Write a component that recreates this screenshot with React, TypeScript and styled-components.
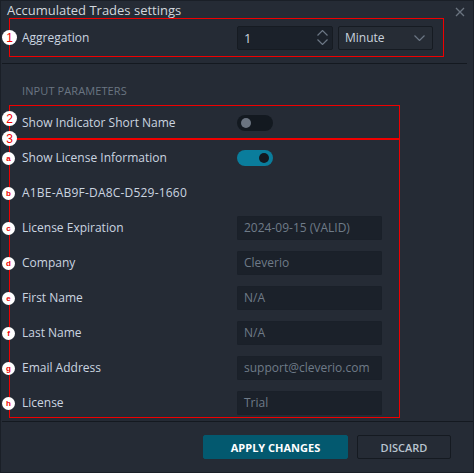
import React from "react";
import styled, { createGlobalStyle } from "styled-components";

const GlobalStyle = createGlobalStyle`
  html, body {
    margin: 0;
    padding: 0;
    background: #252b35;
  }
  * {
    box-sizing: border-box;
  }
`;

const font = `"Open Sans", "Noto Sans", sans-serif`;
const red = "#f00000";

const Dialog = styled.div`
  width: 474px;
  height: 473px;
  background: #252b35;
  border: 1px solid #1a1f27;
  display: flex;
  flex-direction: column;
  font-family: ${font};
  color: #c9d3de;
  position: relative;
`;

const Header = styled.div`
  height: 17px;
  display: flex;
  align-items: center;
  justify-content: space-between;
  padding: 0 8px 0 6px;
`;

const Title = styled.div`
  font-size: 13px;
  color: #d2d7dd;
  line-height: 17px;
  margin-top: 1px;
`;

const CloseBtn = styled.button`
  border: 0;
  background: none;
  padding: 0;
  width: 10px;
  height: 10px;
  margin-top: 5px;
  display: flex;
  cursor: pointer;
`;

const TopBox = styled.div`
  position: relative;
  border: 1px solid ${red};
  margin: 0 29px 0 8px;
  height: 39px;
  display: flex;
  align-items: center;
  padding-left: 12px;
`;

const Divider = styled.div<{ $right?: number }>`
  height: 1px;
  background: #141920;
  margin-left: 1px;
  margin-right: ${(p) => p.$right ?? 0}px;
`;

const Badge = styled.span<{ $small?: boolean; $top: number }>`
  position: absolute;
  left: -8px;
  top: ${(p) => p.$top}px;
  width: ${(p) => (p.$small ? 13 : 15)}px;
  height: ${(p) => (p.$small ? 13 : 15)}px;
  border-radius: 50%;
  background: #ffffff;
  color: ${red};
  font-family: "Liberation Sans", Arial, sans-serif;
  font-size: ${(p) => (p.$small ? 8 : 12)}px;
  font-weight: ${(p) => (p.$small ? 700 : 400)};
  display: flex;
  align-items: center;
  justify-content: center;
  line-height: 1;
  z-index: 2;
`;

const Label = styled.div`
  width: 215px;
  font-size: 12px;
  color: #cbd5e0;
  flex-shrink: 0;
`;

const NumberBox = styled.div`
  width: 96px;
  height: 24px;
  background: #1b212a;
  border: 1px solid #161b22;
  border-radius: 2px;
  display: flex;
  align-items: center;
  justify-content: space-between;
  padding: 0 4px 0 6px;
  font-size: 13px;
  color: #c9d3de;
`;

const Spinner = styled.div`
  display: flex;
  flex-direction: column;
  gap: 3px;
`;

const SelectBox = styled.div`
  width: 95px;
  height: 24px;
  margin-left: 5px;
  background: #262c35;
  border: 1px solid #161b22;
  border-radius: 2px;
  display: flex;
  align-items: center;
  justify-content: space-between;
  padding: 0 7px 0 6px;
  font-size: 12px;
  color: #c9d3de;
`;

const Body = styled.div`
  flex: 1;
  display: flex;
  flex-direction: column;
`;

const SectionTitle = styled.div`
  font-size: 11px;
  color: #6a7582;
  height: 41px;
  padding-top: 19px;
  padding-left: 21px;
  letter-spacing: 0.1px;
`;

const BoxTwo = styled.div`
  position: relative;
  border: 1px solid ${red};
  border-bottom: 0;
  margin: 0 73px 0 8px;
  height: 33px;
`;

const BoxThree = styled.div`
  position: relative;
  border: 1px solid ${red};
  border-top: 2px solid ${red};
  margin: 0 73px 0 8px;
  height: 280px;
`;

const Row = styled.div<{ $h?: number }>`
  height: ${(p) => p.$h ?? 35}px;
  display: flex;
  align-items: center;
  padding-left: 12px;
`;

const Toggle = styled.div<{ $on?: boolean }>`
  width: 36px;
  height: 16px;
  border-radius: 8px;
  background: ${(p) => (p.$on ? "#0a7d9c" : "#131920")};
  display: flex;
  align-items: center;
  justify-content: ${(p) => (p.$on ? "flex-end" : "flex-start")};
  padding: 0 4px;
`;

const Knob = styled.span<{ $on?: boolean }>`
  width: 10px;
  height: 10px;
  border-radius: 50%;
  background: ${(p) => (p.$on ? "#131920" : "#6b7480")};
`;

const Field = styled.div`
  width: 145px;
  height: 24px;
  background: #1b212a;
  border: 1px solid #1a2029;
  border-radius: 1px;
  display: flex;
  align-items: center;
  padding-left: 6px;
  font-size: 12px;
  color: #6f7b88;
`;

const Key = styled.div`
  font-size: 12px;
  color: #cbd5e0;
  letter-spacing: 0.2px;
`;

const Footer = styled.div`
  height: 50px;
  display: flex;
  justify-content: flex-end;
  align-items: flex-start;
  gap: 9px;
  padding: 13px 22px 0 0;
`;

const Button = styled.button<{ $primary?: boolean }>`
  height: 24px;
  width: ${(p) => (p.$primary ? 145 : 94)}px;
  border-radius: 2px;
  border: 1px solid ${(p) => (p.$primary ? "#03596f" : "#151a21")};
  background: ${(p) => (p.$primary ? "#03596f" : "#252b35")};
  color: ${(p) => (p.$primary ? "#ffffff" : "#b9c4d0")};
  font-family: ${font};
  font-size: 11px;
  font-weight: ${(p) => (p.$primary ? 700 : 600)};
  cursor: pointer;
`;

const Chevron = ({ up, w = 11 }: { up?: boolean; w?: number }) => (
  <svg width={w} height="6" viewBox="0 0 11 6" fill="none">
    <path
      d={up ? "M0.5 5.5 L5.5 0.5 L10.5 5.5" : "M0.5 0.5 L5.5 5.5 L10.5 0.5"}
      stroke="#6b7684"
      strokeWidth="1.2"
    />
  </svg>
);

const licenseRows = [
  { badge: "c", label: "License Expiration", value: "2024-09-15 (VALID)" },
  { badge: "d", label: "Company", value: "Cleverio" },
  { badge: "e", label: "First Name", value: "N/A" },
  { badge: "f", label: "Last Name", value: "N/A" },
  { badge: "g", label: "Email Address", value: "support@cleverio.com" },
  { badge: "h", label: "License", value: "Trial" },
];

export default function App() {
  return (
    <>
      <GlobalStyle />
      <Dialog>
        <Header>
          <Title>Accumulated Trades settings</Title>
          <CloseBtn aria-label="close">
            <svg width="10" height="10" viewBox="0 0 10 10">
              <path d="M1 1 L9 9 M9 1 L1 9" stroke="#6b7480" strokeWidth="1.3" />
            </svg>
          </CloseBtn>
        </Header>

        <TopBox>
          <Badge $top={11}>1</Badge>
          <Label>Aggregation</Label>
          <NumberBox>
            <span>1</span>
            <Spinner>
              <Chevron up />
              <Chevron />
            </Spinner>
          </NumberBox>
          <SelectBox>
            <span>Minute</span>
            <Chevron />
          </SelectBox>
        </TopBox>

        <div style={{ height: 6 }} />
        <Divider $right={6} />

        <Body>
          <SectionTitle>INPUT PARAMETERS</SectionTitle>
          <BoxTwo>
            <Badge $top={5}>2</Badge>
            <Row $h={33}>
              <Label>Show Indicator Short Name</Label>
              <Toggle>
                <Knob />
              </Toggle>
            </Row>
          </BoxTwo>
          <BoxThree>
            <Badge $top={-9}>3</Badge>
            {[
              { badge: "a", top: 12 },
              { badge: "b", top: 47 },
              ...licenseRows.map((r, i) => ({ badge: r.badge, top: 82 + i * 35 })),
            ].map((b) => (
              <Badge key={b.badge} $small $top={b.top}>
                {b.badge}
              </Badge>
            ))}
            <Row>
              <Label>Show License Information</Label>
              <Toggle $on>
                <Knob $on />
              </Toggle>
            </Row>
            <Row>
              <Key>A1BE-AB9F-DA8C-D529-1660</Key>
            </Row>
            {licenseRows.map((r) => (
              <Row key={r.badge}>
                <Label>{r.label}</Label>
                <Field>{r.value}</Field>
              </Row>
            ))}
          </BoxThree>
        </Body>

        <Divider />
        <Footer>
          <Button $primary>APPLY CHANGES</Button>
          <Button>DISCARD</Button>
        </Footer>
      </Dialog>
    </>
  );
}
